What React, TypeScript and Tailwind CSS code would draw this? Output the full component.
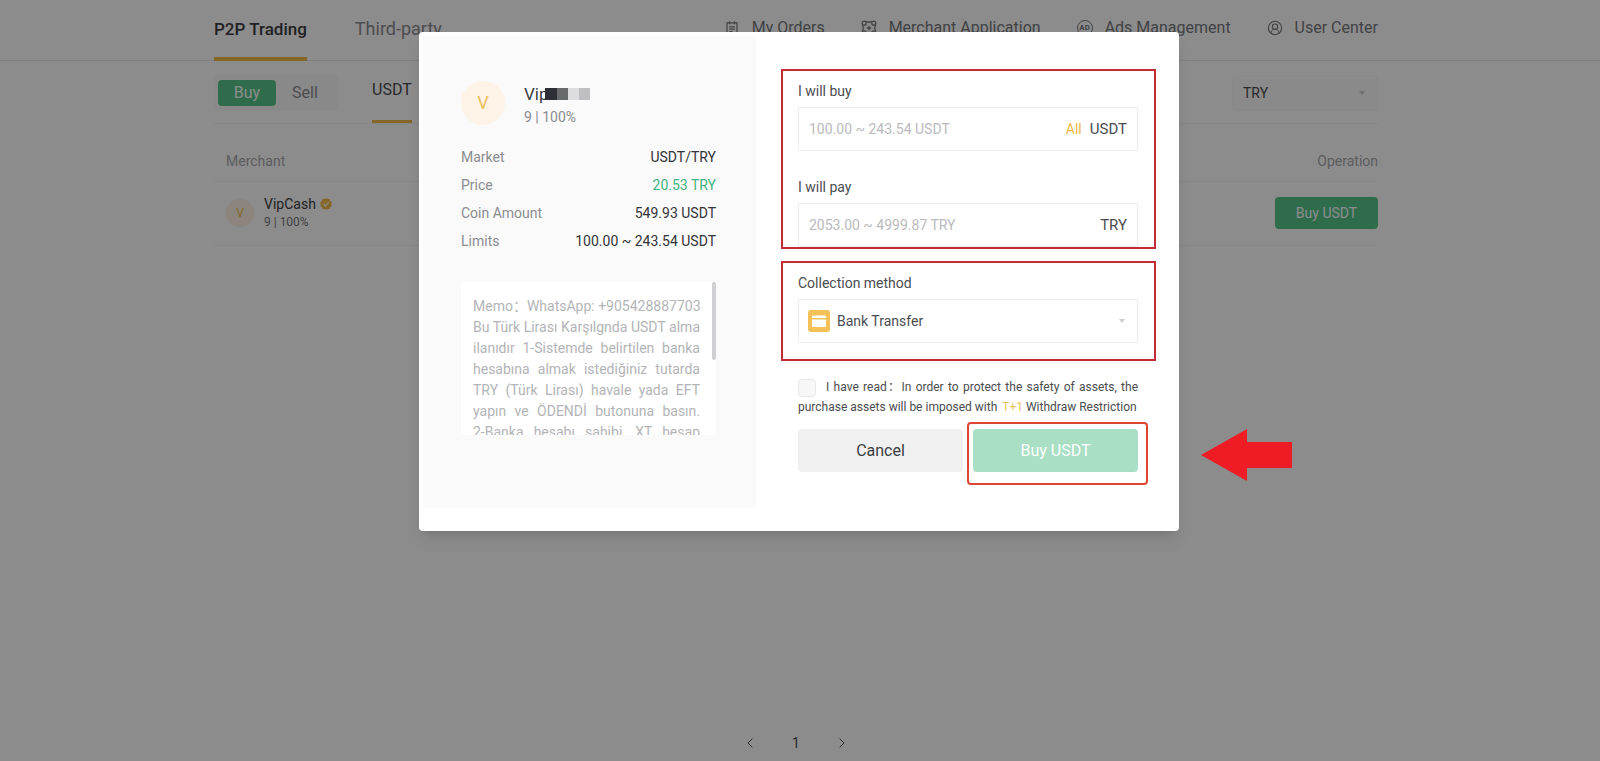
import type { ReactNode } from "react";
import { ChevronLeft, ChevronRight, CircleUserRound } from "lucide-react";

const details = [
  { label: "Market", value: "USDT/TRY", color: "text-[#333438]" },
  { label: "Price", value: "20.53 TRY", color: "text-[#43b581]" },
  { label: "Coin Amount", value: "549.93 USDT", color: "text-[#333438]" },
  { label: "Limits", value: "100.00 ~ 243.54 USDT", color: "text-[#333438]" },
];

const memoLines = [
  "Memo：WhatsApp: +905428887703",
  "Bu Türk Lirası Karşılgnda USDT alma",
  "ilanıdır 1-Sistemde belirtilen banka",
  "hesabına almak istediğiniz tutarda",
  "TRY (Türk Lirası) havale yada EFT",
  "yapın ve ÖDENDİ butonuna basın.",
  "2-Banka hesabı sahibi, XT hesap",
];

function OrdersIcon() {
  return (
    <svg viewBox="0 0 16 16" className="h-4 w-4" fill="none" stroke="currentColor" strokeWidth="1.2">
      <path d="M3 2.8h10v11.8H3zM5.6 1.2v3M10.4 1.2v3M5.2 6.8h5.6M5.2 9.2h5.6M5.2 11.6h3.4" />
    </svg>
  );
}

function MerchantIcon() {
  return (
    <svg viewBox="0 0 16 16" className="h-4 w-4" fill="none" stroke="currentColor" strokeWidth="1.3">
      <circle cx="3.2" cy="3.2" r="2" />
      <circle cx="12.8" cy="3.2" r="2" />
      <circle cx="3.2" cy="12.8" r="2" />
      <circle cx="12.8" cy="12.8" r="2" />
      <path d="M5.2 1.2c1 1.4 4.6 1.4 5.6 0M5.2 14.8c1-1.4 4.6-1.4 5.6 0M1.2 5.2c1.4 1 1.4 4.6 0 5.6M14.8 5.2c-1.4 1-1.4 4.6 0 5.6M8 5.8v4.4M5.8 8h4.4" />
    </svg>
  );
}

function AdsIcon() {
  return (
    <span className="flex h-4 w-4 items-center justify-center rounded-full border border-current text-[8px] font-bold leading-none">
      AD
    </span>
  );
}

function VerifiedIcon() {
  return (
    <svg viewBox="0 0 12 12" className="h-3 w-3">
      <path
        d="M6 0l1.6 1 1.9.1.7 1.8L11.7 4l-.4 2 .4 2-1.5 1.1-.7 1.8-1.9.1L6 12l-1.6-1-1.9-.1-.7-1.8L.3 8l.4-2-.4-2 1.5-1.1.7-1.8L4.4 1z"
        fill="#f3bd4b"
      />
      <path d="M3.6 6l1.8 1.8 3.2-3.4" fill="none" stroke="#fff" strokeWidth="1.2" />
    </svg>
  );
}

function Caret() {
  return (
    <svg viewBox="0 0 8 5" className="pointer-events-none absolute right-3 top-1/2 h-1 w-2 -translate-y-1/2">
      <path d="M0 0h8L4 5z" fill="#cfcfd2" />
    </svg>
  );
}

function CardIcon() {
  return (
    <svg viewBox="0 0 22 22" className="pointer-events-none absolute left-2.5 top-1/2 h-[22px] w-[22px] -translate-y-1/2">
      <rect width="22" height="22" rx="3" fill="#f3c158" />
      <path d="M5 5.6h12a1 1 0 0 1 1 1V8H4V6.6a1 1 0 0 1 1-1z" fill="#fff" />
      <path d="M4 9.4h14V16a1 1 0 0 1-1 1H5a1 1 0 0 1-1-1z" fill="#fff" />
    </svg>
  );
}

function NavLink({ icon, children }: { icon: ReactNode; children: ReactNode }) {
  return (
    <a href="#" className="flex items-center gap-3 text-base text-[#77787c]">
      {icon}
      {children}
    </a>
  );
}

function AmountField({ id, label, placeholder, children }: { id: string; label: string; placeholder: string; children: ReactNode }) {
  return (
    <div>
      <label htmlFor={id} className="block text-sm text-[#4b4c50]">{label}</label>
      <div className="mt-1.5 flex h-11 items-center gap-2 rounded-xs border border-[#ececee] px-2.5 text-[15px] text-[#4b4c50]">
        <input id={id} placeholder={placeholder} className="min-w-0 flex-1 text-sm outline-none placeholder:text-[#b9babd]" />
        {children}
      </div>
    </div>
  );
}

function Header() {
  return (
    <header className="border-b border-[#e9e9eb] pr-2">
      <div className="mx-auto flex h-15 max-w-[1164px] justify-between">
        <nav className="flex gap-12 text-lg">
          <a href="#" className="-mb-px border-b-4 border-[#f0bb45] pt-[15px] text-[17px] leading-7 font-medium text-[#3c3d42]">P2P Trading</a>
          <a href="#" className="pt-[15px] text-[#8b8c90]">Third-party</a>
        </nav>
        <nav className="flex gap-9 pb-1">
          <NavLink icon={<OrdersIcon />}>My Orders</NavLink>
          <NavLink icon={<MerchantIcon />}>Merchant Application</NavLink>
          <NavLink icon={<AdsIcon />}>Ads Management</NavLink>
          <NavLink icon={<CircleUserRound className="h-4 w-4" strokeWidth={1.6} />}>User Center</NavLink>
        </nav>
      </div>
    </header>
  );
}

function Market() {
  return (
    <main className="w-full flex-1 pr-2">
      <div className="mx-auto max-w-[1164px]">
        <div className="flex items-start justify-between border-b border-[#f4f4f5] pt-3.5">
          <div className="flex">
            <div className="flex h-9 items-center rounded bg-[#fafafa] px-1 text-base">
              <button className="h-[26px] w-[58px] rounded bg-[#55c58a] text-white">Buy</button>
              <button className="h-[26px] w-[58px] text-[#8b8c90]">Sell</button>
            </div>
            <a href="#" className="ml-[34px] h-12 border-b-3 border-[#f0bb45] pt-[3px] text-base text-[#4b4c50]">USDT</a>
          </div>
          <div className="relative w-[146px]">
            <select aria-label="Currency" className="h-9 w-full appearance-none rounded border border-[#f7f7f8] bg-[#fcfcfc] px-2.5 text-sm text-[#4b4c50]">
              <option>TRY</option>
            </select>
            <Caret />
          </div>
        </div>

        <table className="mt-[17px] w-full text-sm">
          <thead>
            <tr className="h-10 border-b border-[#f4f4f5] text-[#a9aaae]">
              <th className="pl-3 text-left font-normal">Merchant</th>
              <th className="text-right font-normal">Operation</th>
            </tr>
          </thead>
          <tbody>
            <tr className="h-16 border-b border-[#f4f4f5]">
              <td className="pl-3">
                <div className="flex items-center gap-2.5">
                  <span className="flex h-7 w-7 items-center justify-center rounded-full bg-[#fdf3e6] text-xs text-[#f0bb45]">V</span>
                  <div>
                    <div className="flex items-center gap-1 text-sm leading-[18px] text-[#3c3d42]">
                      VipCash
                      <VerifiedIcon />
                    </div>
                    <div className="text-xs leading-[18px] text-[#77787c]">9 | 100%</div>
                  </div>
                </div>
              </td>
              <td className="text-right">
                <button className="h-8 w-[103px] rounded bg-[#55c58a] text-white">Buy USDT</button>
              </td>
            </tr>
          </tbody>
        </table>
      </div>
    </main>
  );
}

function OrderSummary() {
  return (
    <section className="h-[472px] w-[333px] shrink-0 bg-[#fafafa] pl-[38px] pr-10 pt-[45px]">
      <div className="flex h-11 items-start gap-[19px]">
        <span className="flex h-11 w-11 items-center justify-center rounded-full bg-[#fdf3e6] text-lg text-[#ecc05c]">V</span>
        <div>
          <div className="flex items-center text-[17px] leading-[26px] text-[#3c3d42]">
            Vip
            <span className="-ml-1 flex">
              <i className="h-3 w-3 bg-[#2f3037]" />
              <i className="h-3 w-[11px] bg-[#68696c]" />
              <i className="h-3 w-[11px] bg-[#dddddf]" />
              <i className="h-3 w-[11px] bg-[#bfbfc1]" />
            </span>
          </div>
          <div className="text-sm leading-5 text-[#8b8c90]">9 | 100%</div>
        </div>
      </div>
      <dl className="mt-[18px] text-sm leading-7">
        {details.map((d) => (
          <div key={d.label} className="flex justify-between">
            <dt className="text-[#8b8c90]">{d.label}</dt>
            <dd className={d.color}>{d.value}</dd>
          </div>
        ))}
      </dl>
      <div className="relative mt-[27px] h-[153px] overflow-hidden bg-white pl-3 pr-4 pt-3.5 text-sm leading-[21px] text-[#b3b4b7]">
        {memoLines.map((line) => (
          <p key={line} className="whitespace-nowrap text-justify [text-align-last:justify]">{line}</p>
        ))}
        <span className="absolute right-0 top-0 h-[78px] w-1 rounded-full bg-[#d0d0d2]" />
      </div>
    </section>
  );
}

function OrderForm() {
  return (
    <form className="flex-1 pl-[42px] pr-[37px] pt-[45px]">
      <div className="relative">
        <div className="flex flex-col gap-[26px]">
          <AmountField id="buy" label="I will buy" placeholder="100.00 ~ 243.54 USDT">
            <button type="button" className="text-sm text-[#efb93f]">All</button>
            <span>USDT</span>
          </AmountField>
          <AmountField id="pay" label="I will pay" placeholder="2053.00 ~ 4999.87 TRY">
            <span>TRY</span>
          </AmountField>
        </div>
        <span className="pointer-events-none absolute -bottom-0.5 -left-[17px] -right-[18px] -top-3 border-2 border-[#c32c35]" />
      </div>

      <div className="relative mt-[26px]">
        <label htmlFor="method" className="block text-sm text-[#4b4c50]">Collection method</label>
        <div className="relative mt-1.5">
          <select id="method" className="h-11 w-full appearance-none rounded-xs border border-[#ececee] bg-white pl-[38px] text-sm text-[#4b4c50]">
            <option>Bank Transfer</option>
          </select>
          <CardIcon />
          <Caret />
        </div>
        <span className="pointer-events-none absolute -bottom-[18px] -left-[17px] -right-[18px] -top-3 border-2 border-[#c32c35]" />
      </div>

      <label className="mt-[34px] block text-justify text-xs leading-5 text-[#4b4c50]">
        <input type="checkbox" className="mr-2.5 h-[18px] w-[18px] appearance-none rounded-sm border border-[#e6e6e8] bg-[#f7f7f8] align-middle" />
        I have read：In order to protect the safety of assets, the purchase assets will be imposed with{" "}
        <span className="ml-0.5 text-[#e8c558]">T+1</span> Withdraw Restriction
      </label>

      <div className="mt-3 flex gap-2.5 text-base">
        <button type="button" className="h-[43px] flex-1 rounded bg-[#f0f0f0] text-[#3c3d42]">Cancel</button>
        <div className="relative flex-1">
          <button type="submit" className="h-[43px] w-full rounded bg-[#a9dfc5] text-white">Buy USDT</button>
          <span className="pointer-events-none absolute -bottom-[13px] -left-1.5 -right-2.5 -top-[7px] rounded border-2 border-[#df4531]" />
          <svg viewBox="0 0 91 52" className="absolute -right-[154px] top-0 h-[52px] w-[91px]">
            <path d="M0 26L46 0v13h45v26H46v13z" fill="#ee1c24" />
          </svg>
        </div>
      </div>
    </form>
  );
}

export default function App() {
  return (
    <div className="relative min-h-screen bg-white font-[Roboto,'Noto_Sans_CJK_SC',sans-serif]">
      <div className="flex min-h-screen flex-col">
        <Header />
        <Market />
        <nav className="flex items-center justify-center gap-[34px] pb-2 pr-2 text-sm text-[#4b4c50]" aria-label="Pagination">
          <button aria-label="Previous"><ChevronLeft className="h-4 w-4" strokeWidth={1.5} /></button>
          <span>1</span>
          <button aria-label="Next"><ChevronRight className="h-4 w-4" strokeWidth={1.5} /></button>
        </nav>
      </div>

      <div className="absolute inset-0 flex items-start justify-center bg-black/45 pr-0.5 pt-8">
        <div role="dialog" className="flex w-full max-w-[760px] rounded-sm bg-white px-1 pb-[23px] pt-1 shadow-lg">
          <OrderSummary />
          <OrderForm />
        </div>
      </div>
    </div>
  );
}
